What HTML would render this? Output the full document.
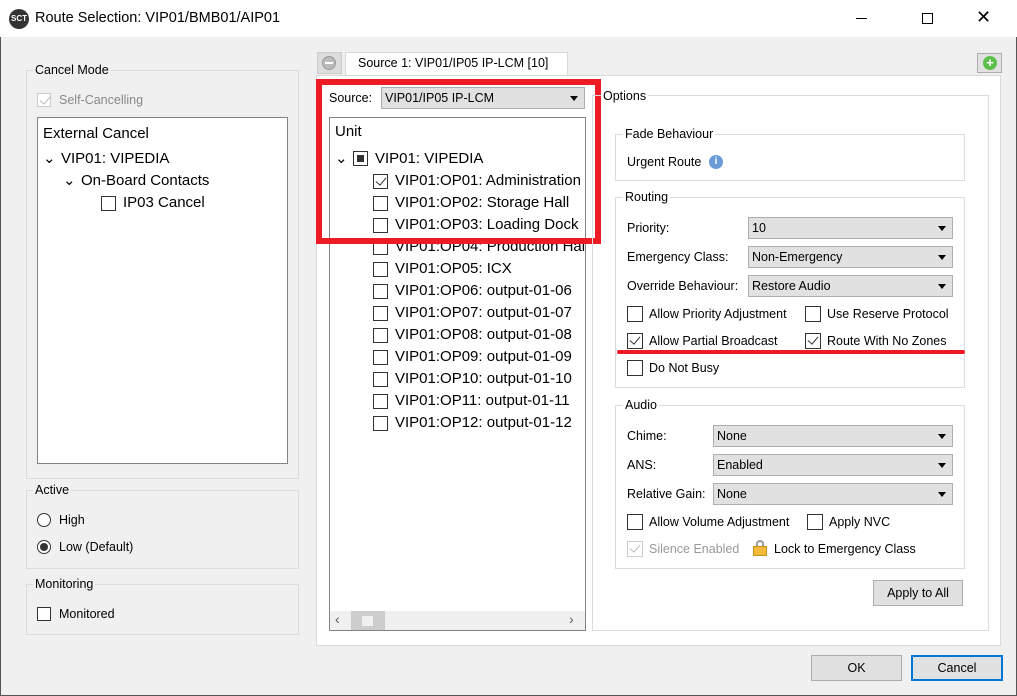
<!DOCTYPE html>
<html><head><meta charset="utf-8"><style>
*{box-sizing:border-box;margin:0;padding:0}
body{width:1017px;height:696px;overflow:hidden;background:#f0f0f0;font-family:"Liberation Sans",sans-serif;font-size:12.5px;color:#000;position:relative}
.a{position:absolute;white-space:nowrap}
.grp{position:absolute;border:1px solid #dcdcdc}
.lg{position:absolute;background:#f0f0f0;padding:0 2px;font-size:12.5px;line-height:14px}
.cb{position:absolute;width:14px;height:14px;border:1px solid #333;background:#fff}
.cb.c::after{content:"";position:absolute;left:4px;top:0px;width:5px;height:9px;border:solid #333;border-width:0 1.5px 1.5px 0;transform:rotate(40deg)}
.cb.d{border-color:#ccc}.cb.d::after{border-color:#bbb}
.dd{position:absolute;height:22px;background:#e1e1e1;border:1px solid #adadad;font-size:12.5px;line-height:20px;padding-left:3px}
.dd::after{content:"";position:absolute;right:6px;top:8px;border:4px solid transparent;border-top:5px solid #000;border-bottom:0}
.btn{position:absolute;background:#e1e1e1;border:1px solid #adadad;text-align:center;font-size:12.5px}
.t{font-size:15px;line-height:18px}
</style></head><body>
<div class="a" style="left:0;top:0;width:1017px;height:37px;background:#fff"></div>
<div class="a" style="left:9px;top:9px;width:20px;height:20px;border-radius:50%;background:#333;color:#fff;font-size:8px;font-weight:bold;line-height:20px;text-align:center">SCT</div>
<div class="a" style="left:35px;top:10px;font-size:14.5px">Route Selection: VIP01/BMB01/AIP01</div>
<div class="a" style="left:856px;top:18px;width:11px;height:1px;background:#000"></div>
<div class="a" style="left:922px;top:13px;width:11px;height:11px;border:1px solid #000"></div>
<div class="a" style="left:976px;top:6px;font-size:18px;line-height:22px">✕</div>
<div class="a" style="left:0;top:37px;width:1px;height:659px;background:#555"></div>
<div class="a" style="left:1016px;top:37px;width:1px;height:659px;background:#555"></div>
<div class="a" style="left:0;top:695px;width:1017px;height:1px;background:#555"></div>

<div class="grp" style="left:26px;top:70px;width:273px;height:409px"></div>
<div class="lg" style="left:33px;top:63px">Cancel Mode</div>
<div class="cb c d" style="left:37px;top:93px"></div>
<div class="a" style="left:59px;top:93px;color:#888">Self-Cancelling</div>
<div class="a" style="left:37px;top:117px;width:251px;height:347px;background:#fff;border:1px solid #828282"></div>
<div class="a t" style="left:43px;top:125px">External Cancel</div>
<div class="a t" style="left:43px;top:150px">⌄</div>
<div class="a t" style="left:61px;top:150px">VIP01: VIPEDIA</div>
<div class="a t" style="left:63px;top:172px">⌄</div>
<div class="a t" style="left:81px;top:172px">On-Board Contacts</div>
<div class="cb" style="left:101px;top:196px;width:15px;height:15px"></div>
<div class="a t" style="left:123px;top:194px">IP03 Cancel</div>

<div class="grp" style="left:26px;top:490px;width:273px;height:79px"></div>
<div class="lg" style="left:33px;top:483px">Active</div>
<div class="a" style="left:37px;top:513px;width:14px;height:14px;border:1px solid #333;border-radius:50%;background:#fff"></div>
<div class="a" style="left:59px;top:513px">High</div>
<div class="a" style="left:37px;top:540px;width:14px;height:14px;border:1px solid #333;border-radius:50%;background:#fff"></div>
<div class="a" style="left:40px;top:543px;width:8px;height:8px;border-radius:50%;background:#333"></div>
<div class="a" style="left:59px;top:540px">Low (Default)</div>
<div class="grp" style="left:26px;top:584px;width:273px;height:51px"></div>
<div class="lg" style="left:33px;top:577px">Monitoring</div>
<div class="cb" style="left:37px;top:607px"></div>
<div class="a" style="left:59px;top:607px">Monitored</div>

<div class="a" style="left:317px;top:52px;width:25px;height:22px;background:#ddd;border:1px solid #ccc"></div>
<div class="a" style="left:322px;top:56px;width:14px;height:14px;border-radius:50%;background:#bbb;border:1px solid #999"></div>
<div class="a" style="left:325px;top:62px;width:8px;height:2px;background:#fff"></div>
<div class="a" style="left:345px;top:52px;width:223px;height:24px;background:#fff;border:1px solid #d9d9d9;border-bottom:none"></div>
<div class="a" style="left:358px;top:56px">Source 1: VIP01/IP05 IP-LCM [10]</div>
<div class="a" style="left:977px;top:53px;width:25px;height:20px;background:#e1e1e1;border:1px solid #adadad"></div>
<div class="a" style="left:983px;top:56px;width:14px;height:14px;border-radius:50%;background:#5cbf4b;color:#fff;font-size:13px;line-height:13px;text-align:center;font-weight:bold">+</div>
<div class="a" style="left:316px;top:75px;width:685px;height:571px;background:#fff;border:1px solid #d9d9d9"></div>

<div class="a" style="left:329px;top:91px">Source:</div>
<div class="dd" style="left:381px;top:87px;width:204px">VIP01/IP05 IP-LCM</div>
<div class="a" style="left:329px;top:117px;width:257px;height:514px;background:#fff;border:1px solid #828282"></div>
<div class="a t" style="left:335px;top:123px">Unit</div>
<div class="a t" style="left:335px;top:150px">⌄</div>
<div class="cb" style="left:353px;top:151px;width:15px;height:15px"></div>
<div class="a" style="left:357px;top:155px;width:7px;height:7px;background:#333"></div>
<div class="a t" style="left:375px;top:150px">VIP01: VIPEDIA</div>
<div style="position:absolute;left:330px;top:117px;width:255px;height:493px;overflow:hidden">
<div class="cb c" style="left:43px;top:57px;width:15px;height:15px"></div><div class="a t" style="left:65px;top:55px">VIP01:OP01: Administration</div>
<div class="cb" style="left:43px;top:79px;width:15px;height:15px"></div><div class="a t" style="left:65px;top:77px">VIP01:OP02: Storage Hall</div>
<div class="cb" style="left:43px;top:101px;width:15px;height:15px"></div><div class="a t" style="left:65px;top:99px">VIP01:OP03: Loading Dock</div>
<div class="cb" style="left:43px;top:123px;width:15px;height:15px"></div><div class="a t" style="left:65px;top:121px">VIP01:OP04: Production Hall</div>
<div class="cb" style="left:43px;top:145px;width:15px;height:15px"></div><div class="a t" style="left:65px;top:143px">VIP01:OP05: ICX</div>
<div class="cb" style="left:43px;top:167px;width:15px;height:15px"></div><div class="a t" style="left:65px;top:165px">VIP01:OP06: output-01-06</div>
<div class="cb" style="left:43px;top:189px;width:15px;height:15px"></div><div class="a t" style="left:65px;top:187px">VIP01:OP07: output-01-07</div>
<div class="cb" style="left:43px;top:211px;width:15px;height:15px"></div><div class="a t" style="left:65px;top:209px">VIP01:OP08: output-01-08</div>
<div class="cb" style="left:43px;top:233px;width:15px;height:15px"></div><div class="a t" style="left:65px;top:231px">VIP01:OP09: output-01-09</div>
<div class="cb" style="left:43px;top:255px;width:15px;height:15px"></div><div class="a t" style="left:65px;top:253px">VIP01:OP10: output-01-10</div>
<div class="cb" style="left:43px;top:277px;width:15px;height:15px"></div><div class="a t" style="left:65px;top:275px">VIP01:OP11: output-01-11</div>
<div class="cb" style="left:43px;top:299px;width:15px;height:15px"></div><div class="a t" style="left:65px;top:297px">VIP01:OP12: output-01-12</div>
</div>
<div class="a" style="left:330px;top:611px;width:255px;height:19px;background:#f0f0f0"></div>
<div class="a" style="left:351px;top:611px;width:34px;height:19px;background:#cdcdcd"></div>
<div class="a" style="left:362px;top:616px;width:11px;height:10px;background:#f0f0f0"></div>
<div class="a" style="left:335px;top:611px;font-size:14px;color:#555">‹</div>
<div class="a" style="left:569px;top:611px;font-size:14px;color:#555">›</div>
<div class="a" style="left:316px;top:79px;width:285px;height:165px;border:6px solid #ed1c24"></div>

<div class="grp" style="left:592px;top:95px;width:397px;height:536px"></div>
<div class="lg" style="left:601px;top:89px;background:#fff">Options</div>
<div class="grp" style="left:615px;top:134px;width:350px;height:47px"></div>
<div class="lg" style="left:623px;top:127px;background:#fff">Fade Behaviour</div>
<div class="a" style="left:627px;top:155px">Urgent Route</div>
<div class="a" style="left:709px;top:155px;width:14px;height:14px;border-radius:50%;background:#6a9bd6;color:#fff;font-size:10px;font-weight:bold;text-align:center;line-height:14px">i</div>

<div class="grp" style="left:615px;top:197px;width:350px;height:191px"></div>
<div class="lg" style="left:623px;top:190px;background:#fff">Routing</div>
<div class="a" style="left:627px;top:221px">Priority:</div>
<div class="dd" style="left:748px;top:217px;width:205px">10</div>
<div class="a" style="left:627px;top:250px">Emergency Class:</div>
<div class="dd" style="left:748px;top:246px;width:205px">Non-Emergency</div>
<div class="a" style="left:627px;top:279px">Override Behaviour:</div>
<div class="dd" style="left:748px;top:275px;width:205px">Restore Audio</div>
<div class="cb" style="left:627px;top:306px;width:16px;height:16px"></div><div class="a" style="left:649px;top:307px">Allow Priority Adjustment</div>
<div class="cb" style="left:805px;top:306px;width:16px;height:16px"></div><div class="a" style="left:827px;top:307px">Use Reserve Protocol</div>
<div class="cb c" style="left:627px;top:333px;width:16px;height:16px"></div><div class="a" style="left:649px;top:334px">Allow Partial Broadcast</div>
<div class="cb c" style="left:805px;top:333px;width:16px;height:16px"></div><div class="a" style="left:827px;top:334px">Route With No Zones</div>
<div class="a" style="left:617px;top:350px;width:348px;height:4px;border-radius:2px;background:#ed1c24"></div>
<div class="cb" style="left:627px;top:360px;width:16px;height:16px"></div><div class="a" style="left:649px;top:361px">Do Not Busy</div>

<div class="grp" style="left:615px;top:405px;width:350px;height:164px"></div>
<div class="lg" style="left:623px;top:398px;background:#fff">Audio</div>
<div class="a" style="left:627px;top:429px">Chime:</div>
<div class="dd" style="left:713px;top:425px;width:240px">None</div>
<div class="a" style="left:627px;top:458px">ANS:</div>
<div class="dd" style="left:713px;top:454px;width:240px">Enabled</div>
<div class="a" style="left:627px;top:487px">Relative Gain:</div>
<div class="dd" style="left:713px;top:483px;width:240px">None</div>
<div class="cb" style="left:627px;top:514px;width:16px;height:16px"></div><div class="a" style="left:649px;top:515px">Allow Volume Adjustment</div>
<div class="cb" style="left:807px;top:514px;width:16px;height:16px"></div><div class="a" style="left:829px;top:515px">Apply NVC</div>
<div class="cb c d" style="left:627px;top:541px;width:16px;height:16px"></div><div class="a" style="left:649px;top:542px;color:#999">Silence Enabled</div>
<div class="a" style="left:753px;top:540px;width:14px;height:16px"><div style="position:absolute;left:3px;top:0;width:8px;height:8px;border:2px solid #999;border-bottom:none;border-radius:4px 4px 0 0"></div><div style="position:absolute;left:0;top:6px;width:14px;height:10px;background:#f2b93b;border:1px solid #c9901c"></div></div>
<div class="a" style="left:774px;top:542px">Lock to Emergency Class</div>
<div class="btn" style="left:873px;top:580px;width:90px;height:26px;line-height:24px">Apply to All</div>

<div class="btn" style="left:811px;top:655px;width:91px;height:26px;line-height:24px">OK</div>
<div class="btn" style="left:911px;top:655px;width:92px;height:26px;line-height:22px;border:2px solid #0078d7">Cancel</div>
</body></html>
